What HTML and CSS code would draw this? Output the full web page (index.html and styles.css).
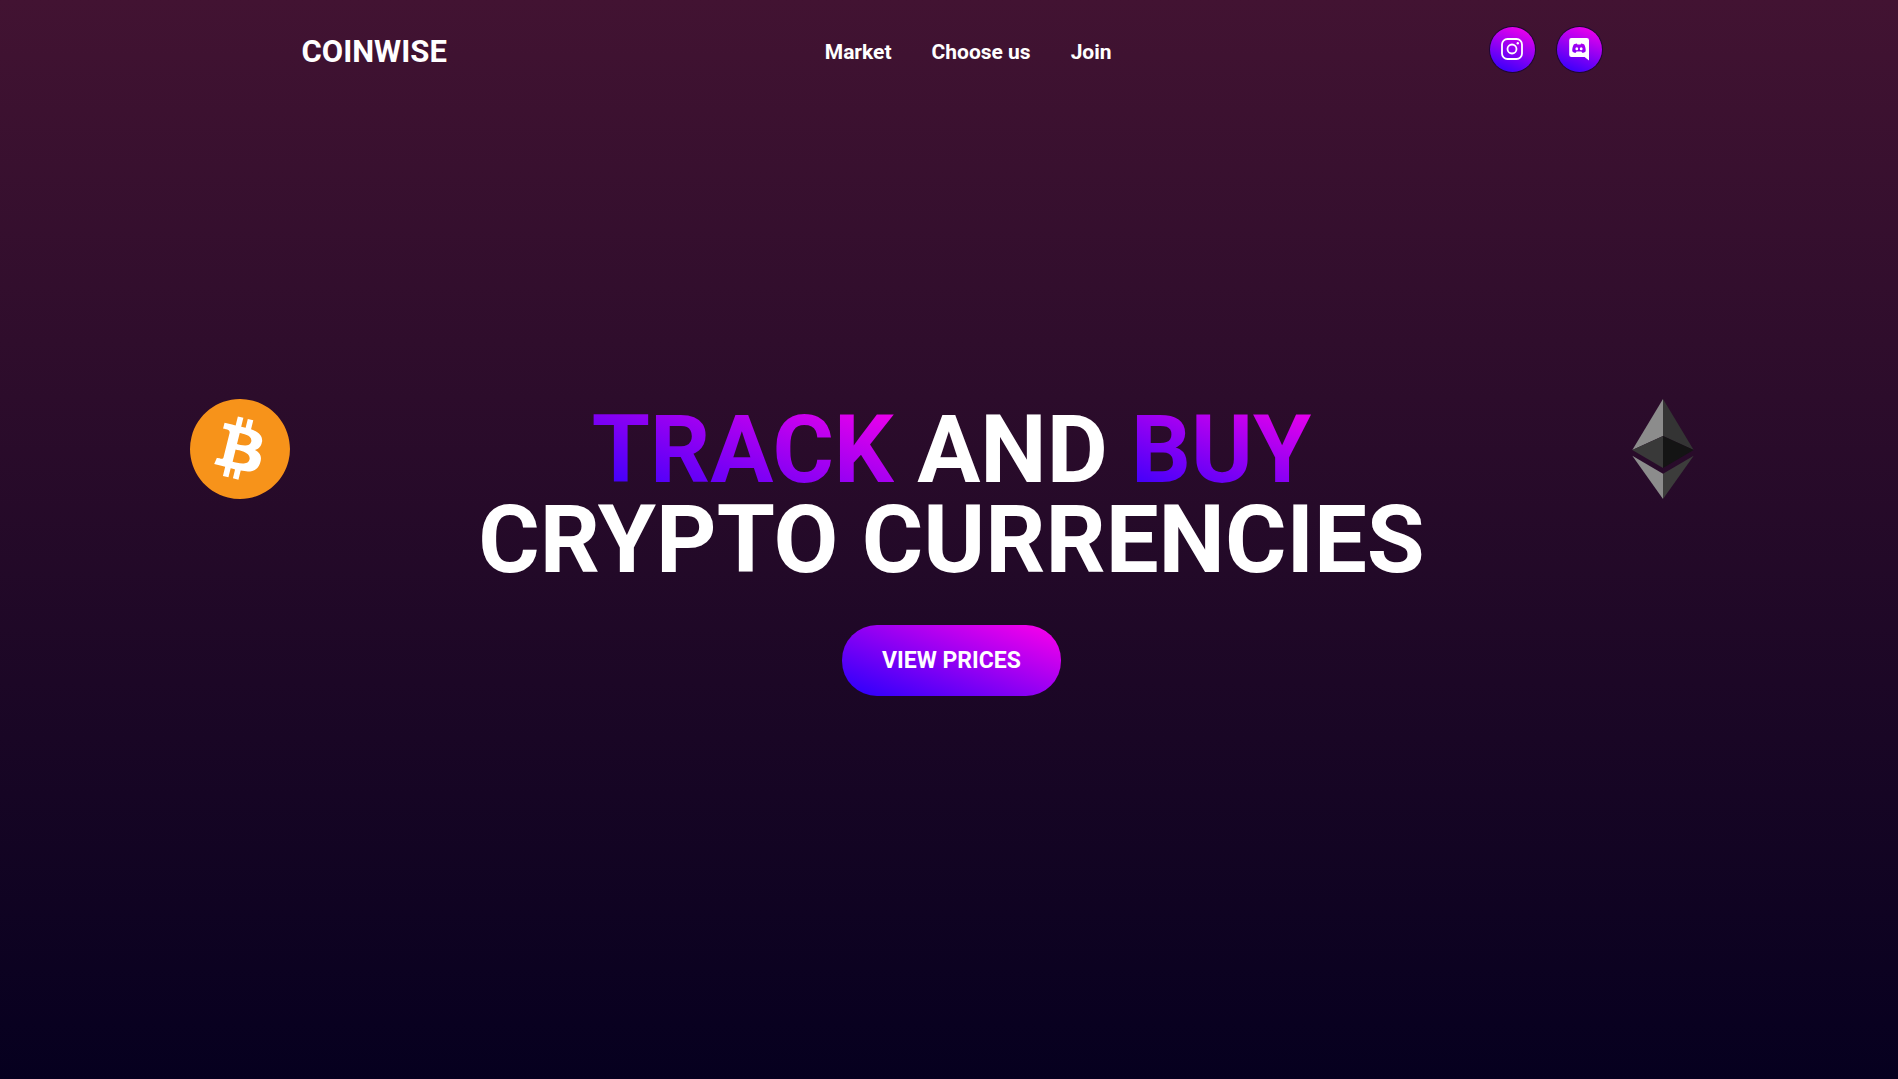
FILE: index.html
```html
<!DOCTYPE html>
<html lang="en">
<head>
<meta charset="utf-8">
<meta name="viewport" content="width=device-width, initial-scale=1">
<title>Coinwise</title>
<link rel="stylesheet" href="styles.css">
</head>
<body>
<div class="page">
  <header class="navbar">
    <a class="brand" href="#">COINWISE</a>
    <nav class="menu">
      <a href="#market">Market</a>
      <a href="#choose-us">Choose us</a>
      <a href="#join">Join</a>
    </nav>
    <div class="social">
      <a class="disc" href="#instagram" aria-label="Instagram">
        <svg width="24" height="24" viewBox="0 0 24 24" fill="none" stroke="#fff" stroke-width="1.800">
          <rect x="2" y="2" width="20" height="20" rx="5.500"/>
          <circle cx="12" cy="12" r="4.500"/>
          <circle cx="17.800" cy="6.300" r="1.200" fill="#fff" stroke="none"/>
        </svg>
      </a>
      <a class="disc" href="#discord" aria-label="Discord">
        <svg width="24" height="24" viewBox="0 0 24 24" fill="#fff">
          <path fill-rule="evenodd" d="M4.500 1h15.200a2.300 2.300 0 0 1 2.300 2.300V23.500l-4.400-3.500H4.500a2.300 2.300 0 0 1-2.300-2.300V3.300A2.300 2.300 0 0 1 4.500 1zM9.900 6.600c-1.500.1-2.900.8-3.300 1.200-.9 1.900-1.500 4-1.300 6.400.9 1 2.200 1.500 3.500 1.500l.8-1.200h4.800l.8 1.200c1.300 0 2.600-.5 3.500-1.500.1-2.400-.4-4.500-1.300-6.400-.5-.4-1.900-1.100-3.300-1.200l-.5.800h-3.200z"/>
          <ellipse cx="9.800" cy="11.800" rx="1.400" ry="1.500"/>
          <ellipse cx="14.200" cy="11.800" rx="1.400" ry="1.500"/>
        </svg>
      </a>
    </div>
  </header>

  <main class="hero">
    <svg class="coin" viewBox="0 0 24 24" role="img" aria-label="Bitcoin">
      <circle cx="12" cy="12" r="11" fill="#fff"/>
      <path fill="#f7931a" d="M23.638 14.904c-1.602 6.43-8.113 10.34-14.542 8.736C2.67 22.05-1.244 15.525.362 9.105 1.962 2.67 8.475-1.243 14.9.358c6.43 1.605 10.342 8.115 8.738 14.548v-.002zm-6.35-4.613c.24-1.59-.974-2.45-2.64-3.03l.54-2.153-1.315-.33-.525 2.107c-.345-.087-.705-.167-1.064-.25l.526-2.127-1.32-.33-.54 2.165c-.285-.067-.565-.132-.84-.2l-1.815-.45-.35 1.407s.975.225.955.236c.535.136.63.486.615.766l-1.477 5.92c-.075.166-.24.406-.614.314.015.02-.96-.24-.96-.24l-.66 1.51 1.71.426.93.242-.54 2.19 1.32.327.54-2.17c.36.1.705.19 1.05.273l-.51 2.154 1.32.33.545-2.19c2.24.427 3.93.257 4.64-1.774.57-1.637-.03-2.58-1.217-3.196.854-.193 1.5-.76 1.68-1.93h.01zm-3.01 4.22c-.404 1.64-3.157.75-4.05.53l.72-2.9c.896.23 3.757.67 3.33 2.37zm.41-4.24c-.37 1.49-2.662.735-3.405.55l.654-2.64c.744.18 3.137.524 2.75 2.084v.006z"/>
    </svg>
    <div class="pitch">
      <h1><span class="glow">TRACK</span> AND <span class="glow">BUY</span><br>CRYPTO CURRENCIES</h1>
      <a class="cta" href="#market">VIEW PRICES</a>
    </div>
    <svg class="coin" viewBox="0 0 100 100" role="img" aria-label="Ethereum">
      <path fill="#343434" d="M50 0l30.700 50.900L50 36.900z"/>
      <path fill="#8c8c8c" d="M50 0L19.300 50.900 50 36.900z"/>
      <path fill="#393939" d="M50 36.900V69L19.300 50.900z"/>
      <path fill="#141414" d="M50 36.900V69l30.700-18.100z"/>
      <path fill="#8c8c8c" d="M19.300 56.800L50 74.800V100z"/>
      <path fill="#3c3c3b" d="M80.700 56.800L50 74.800V100z"/>
    </svg>
  </main>
</div>
</body>
</html>
```
FILE: styles.css
```css
:root {
  --accent: linear-gradient(20deg, #2600fc, #ff00ea);
}

* {
  box-sizing: border-box;
}

body {
  margin: 0;
  min-height: 100vh;
  overflow-x: hidden;
  color: #fff;
  font-family: Roboto, "Liberation Sans", sans-serif;
  font-weight: 700;
  background: linear-gradient(to bottom, #421332, #06001f);
}

a {
  color: inherit;
  text-decoration: none;
}

/* The page runs under the scrollbar's edge. */
.page {
  margin-right: -5px;
}

.navbar {
  display: flex;
  justify-content: space-between;
  align-items: center;
  max-width: 1300px;
  height: 98px;
  margin: 0 auto;
}

.brand {
  font-size: 31px;
  line-height: 40px;
  padding-top: 6px;
}

.menu {
  display: flex;
  gap: 40px;
  padding-top: 6px;
  font-size: 21px;
  line-height: 28px;
}

.social {
  display: flex;
  gap: 22px;
}

.disc {
  display: grid;
  place-items: center;
  width: 45px;
  height: 45px;
  border-radius: 50%;
  background: var(--accent);
  box-shadow: 0 0 0 1px #1d0636;
}

.hero {
  display: flex;
  justify-content: space-between;
  align-items: flex-start;
  padding: 301px 10% 0;
}

.coin {
  width: 100px;
  height: 100px;
}

.pitch {
  display: flex;
  flex-direction: column;
  align-items: center;
  gap: 40px;
  padding-top: 6px;
}

h1 {
  margin: 0;
  font-size: 94px;
  line-height: 90px;
  text-align: center;
}

.glow {
  color: transparent;
  background: var(--accent);
  background-clip: text;
  -webkit-background-clip: text;
}

.cta {
  padding: 20px 40px;
  border-radius: 35px;
  font-size: 23px;
  line-height: 31px;
  background: var(--accent);
}
```
